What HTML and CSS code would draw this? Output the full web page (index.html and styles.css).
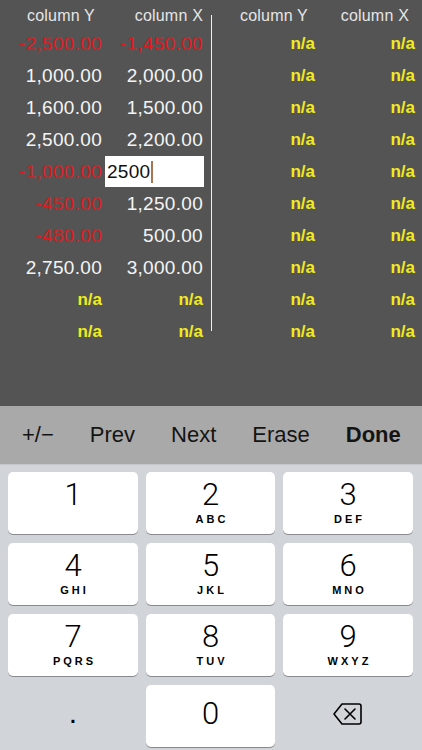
FILE: index.html
```html
<!DOCTYPE html>
<html lang="en">
<head>
  <meta charset="UTF-8" />
  <meta name="viewport" content="width=device-width, initial-scale=1.0"/>
  <title>Columns - Edit</title>
  <link rel="stylesheet" href="styles.css">
</head>
<body>

  <div class="screen">

    <!-- Data sheet -->
    <div class="sheet">
      <div class="grid">
        <div class="head h1">column Y</div>
        <div class="head h2">column X</div>
        <div class="head h3">column Y</div>
        <div class="head h4">column X</div>

        <div class="cell neg">-2,500.00</div>
        <div class="cell neg">-1,450.00</div>
        <div class="cell na c3">n/a</div>
        <div class="cell na">n/a</div>

        <div class="cell">1,000.00</div>
        <div class="cell">2,000.00</div>
        <div class="cell na c3">n/a</div>
        <div class="cell na">n/a</div>

        <div class="cell">1,600.00</div>
        <div class="cell">1,500.00</div>
        <div class="cell na c3">n/a</div>
        <div class="cell na">n/a</div>

        <div class="cell">2,500.00</div>
        <div class="cell">2,200.00</div>
        <div class="cell na c3">n/a</div>
        <div class="cell na">n/a</div>

        <div class="cell neg">-1,000.00</div>
        <div class="cell editing">2500<span class="caret"></span></div>
        <div class="cell na c3">n/a</div>
        <div class="cell na">n/a</div>

        <div class="cell neg">-450.00</div>
        <div class="cell">1,250.00</div>
        <div class="cell na c3">n/a</div>
        <div class="cell na">n/a</div>

        <div class="cell neg">-480.00</div>
        <div class="cell">500.00</div>
        <div class="cell na c3">n/a</div>
        <div class="cell na">n/a</div>

        <div class="cell">2,750.00</div>
        <div class="cell">3,000.00</div>
        <div class="cell na c3">n/a</div>
        <div class="cell na">n/a</div>

        <div class="cell na">n/a</div>
        <div class="cell na">n/a</div>
        <div class="cell na c3">n/a</div>
        <div class="cell na">n/a</div>

        <div class="cell na">n/a</div>
        <div class="cell na">n/a</div>
        <div class="cell na c3">n/a</div>
        <div class="cell na">n/a</div>

        <div class="divider"></div>
      </div>
    </div>

    <!-- Accessory bar -->
    <div class="toolbar">
      <span>+/&minus;</span>
      <span>Prev</span>
      <span>Next</span>
      <span>Erase</span>
      <span class="done">Done</span>
    </div>

    <!-- Number pad -->
    <div class="keypad">
      <div class="key"><span class="digit">1</span></div>
      <div class="key"><span class="digit">2</span><span class="letters">ABC</span></div>
      <div class="key"><span class="digit">3</span><span class="letters">DEF</span></div>
      <div class="key"><span class="digit">4</span><span class="letters">GHI</span></div>
      <div class="key"><span class="digit">5</span><span class="letters">JKL</span></div>
      <div class="key"><span class="digit">6</span><span class="letters">MNO</span></div>
      <div class="key"><span class="digit">7</span><span class="letters">PQRS</span></div>
      <div class="key"><span class="digit">8</span><span class="letters">TUV</span></div>
      <div class="key"><span class="digit">9</span><span class="letters">WXYZ</span></div>
      <div class="key flat"><span class="dot">.</span></div>
      <div class="key zero"><span class="digit">0</span></div>
      <div class="key flat">
        <svg class="backspace" viewBox="0 0 32 24">
          <path d="M10 2h17a2 2 0 0 1 2 2v16a2 2 0 0 1-2 2H10L2 12z" />
          <path d="M13 7l10 10M23 7L13 17" />
        </svg>
      </div>
    </div>

  </div>

</body>
</html>
```

FILE: styles.css
```css
body {
  margin: 0;
  font-family: "Liberation Sans", Arial, sans-serif;
  background: #d1d4d9;
}

.screen {
  width: 422px;
  height: 750px;
  overflow: hidden;
  display: flex;
  flex-direction: column;
}

/* sheet */

.sheet {
  height: 406px;
  background: #545454;
  padding-top: 4px;
  box-sizing: border-box;
}

.grid {
  display: grid;
  grid-template-columns: 104px 101px 7px 105px 100px;
  grid-template-rows: 24px;
  grid-auto-rows: 32px;
}

.head {
  font-size: 16px;
  line-height: 24px;
  color: #e6e6e6;
  text-align: right;
  letter-spacing: 0.2px;
}

.h1 { padding-right: 9px; }
.h2 { padding-right: 2px; }
.h3 { grid-column: 4; padding-right: 9px; }
.h4 { padding-right: 8px; }

.cell {
  font-size: 19px;
  line-height: 32px;
  color: #f4f4f4;
  text-align: right;
  padding-right: 2px;
  letter-spacing: 0.3px;
}

.c3 {
  grid-column: 4;
}

.neg {
  color: #dd1b1f;
}

.na {
  color: #f0ec1c;
  font-weight: bold;
  font-size: 17px;
  letter-spacing: 0;
}

.editing {
  background: #ffffff;
  color: #111111;
  text-align: left;
  margin: 0 1px 1px 1px;
  padding-left: 2px;
  line-height: 31px;
  display: flex;
  align-items: center;
}

.caret {
  display: inline-block;
  width: 2px;
  height: 22px;
  margin-left: 1px;
  background: #a87454;
}

.divider {
  grid-column: 3;
  grid-row: 1 / span 11;
  justify-self: end;
  width: 1px;
  margin: 11px 0 17px 0;
  background: #f0f0f0;
}

/* toolbar */

.toolbar {
  height: 58px;
  background: #a9a9a9;
  display: flex;
  align-items: center;
  gap: 36px;
  padding-left: 22px;
  font-size: 22px;
  color: #141414;
  border-bottom: 1px solid #c4c6ca;
}

.toolbar .done {
  font-weight: bold;
}

/* keypad */

.keypad {
  flex: 1;
  display: grid;
  grid-template-columns: 130px 129px 130px;
  grid-auto-rows: 62px;
  column-gap: 8px;
  row-gap: 9px;
  padding: 7px 9px 0 8px;
}

.key {
  background: #ffffff;
  border-radius: 5px;
  box-shadow: 0 1px 0 #898a8d;
  display: flex;
  flex-direction: column;
  align-items: center;
  padding-top: 7px;
  box-sizing: border-box;
  color: #000000;
}

.digit {
  font-family: Roboto, "Liberation Sans", sans-serif;
  font-weight: 300;
  font-size: 31px;
  line-height: 31px;
}

.letters {
  font-size: 11px;
  font-weight: bold;
  letter-spacing: 3px;
  margin-right: -3px;
  line-height: 14px;
  margin-top: 2px;
}

.zero {
  padding-top: 13px;
}

.flat {
  background: transparent;
  box-shadow: none;
  justify-content: center;
  padding-top: 0;
}

.dot {
  font-size: 30px;
  line-height: 30px;
  margin-bottom: 6px;
}

.backspace {
  width: 32px;
  height: 24px;
  fill: none;
  stroke: #000000;
  stroke-width: 1.6;
  stroke-linejoin: round;
  stroke-linecap: round;
  margin-bottom: 4px;
}
```
